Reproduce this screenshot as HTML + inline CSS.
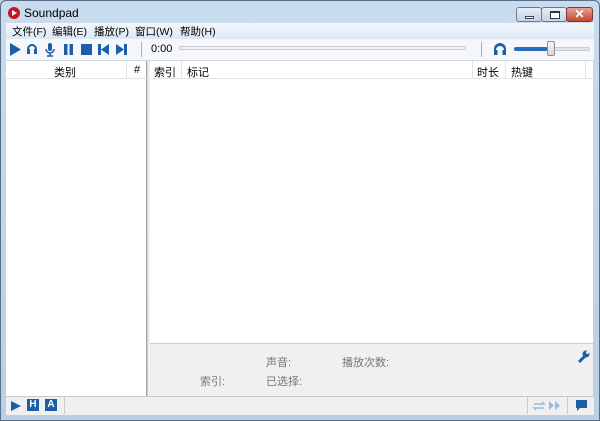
<!DOCTYPE html><html><head><meta charset="utf-8"><style>
*{margin:0;padding:0;box-sizing:border-box}
body{width:600px;height:421px;overflow:hidden;font-family:"Liberation Sans","Noto Sans CJK SC",sans-serif;font-size:11px;color:#000;background:#bcd3ea;position:relative}
.a{position:absolute}
.frame{left:0;top:0;width:600px;height:421px;background:linear-gradient(#c9dcef,#b7cfe8);border:1px solid #5a6e84;border-radius:6px 6px 0 0}
.m{top:24px;font-size:10.5px}
</style></head><body>
<div class="a frame"></div>
<svg class="a" style="left:7px;top:6px" width="14" height="14"><circle cx="7" cy="7" r="6" fill="#c8141e"/><path d="M5 4l5 3-5 3z" fill="#fff"/></svg>
<div class="a" style="left:24px;top:6px;font-size:12px">Soundpad</div>
<div class="a" style="left:516px;top:7px;width:26px;height:15px;border:1px solid #6b7c90;border-radius:3px;background:linear-gradient(#e6eef8,#c3d3e6)"><div class="a" style="left:8px;top:8px;width:9px;height:3px;background:#fff;border:1px solid #444"></div></div>
<div class="a" style="left:541px;top:7px;width:26px;height:15px;border:1px solid #6b7c90;border-radius:3px;background:linear-gradient(#e6eef8,#c3d3e6)"><div class="a" style="left:8px;top:3px;width:10px;height:8px;border:1px solid #333;border-top-width:2px;background:#fff"></div></div>
<div class="a" style="left:566px;top:7px;width:27px;height:15px;border:1px solid #7a3a30;border-radius:3px;background:linear-gradient(#e8a095,#c8452f);color:#fff;font-weight:bold;text-align:center;line-height:13px;font-size:12px">✕</div>
<div class="a" style="left:6px;top:23px;width:588px;height:16px;background:linear-gradient(#f4f8fd,#dde8f5)"></div>
<div class="a m" style="left:12px">文件(F)</div>
<div class="a m" style="left:52px">编辑(E)</div>
<div class="a m" style="left:94px">播放(P)</div>
<div class="a m" style="left:135px">窗口(W)</div>
<div class="a m" style="left:180px">帮助(H)</div>
<div class="a" style="left:6px;top:39px;width:588px;height:22px;background:#f5f7fa;border-bottom:1px solid #cfd6df"></div>
<svg class="a" style="left:8px;top:42px" width="125" height="15" fill="#1c5fa6">
<path d="M2 1l11 6.5-11 6.5z"/>
<path d="M19 12v-5a5 5 0 0 1 10 0v5h-3v-5h1a3 3 0 0 0-6 0h1v5z"/>
<rect x="40" y="1" width="4" height="8" rx="2"/><path d="M38 7a4 4 0 0 0 8 0M42 11v3M39 14h6" stroke="#1c5fa6" stroke-width="1.5" fill="none"/>
<rect x="56" y="2" width="3.5" height="11"/><rect x="61.5" y="2" width="3.5" height="11"/>
<rect x="73" y="2" width="11" height="11"/>
<rect x="90" y="2" width="3" height="11"/><path d="M101 2v11l-8-5.5z"/>
<path d="M108 2v11l8-5.5z"/><rect x="116" y="2" width="3" height="11"/>
</svg>
<div class="a" style="left:141px;top:42px;width:1px;height:15px;background:#a8b0ba"></div>
<div class="a" style="left:151px;top:43px">0:00</div>
<div class="a" style="left:179px;top:46px;width:287px;height:4px;border:1px solid #c8ccd2;border-radius:2px;background:#f0f0f0"></div>
<div class="a" style="left:481px;top:42px;width:1px;height:15px;background:#a8b0ba"></div>
<svg class="a" style="left:493px;top:42px" width="14" height="14" fill="#1c5fa6"><path d="M1 13v-6a6 6 0 0 1 12 0v6h-3.5v-5h1.5a4 4 0 0 0-8 0h1.5v5z"/></svg>
<div class="a" style="left:514px;top:47px;width:34px;height:4px;background:#2a6cb5;border-radius:2px"></div>
<div class="a" style="left:548px;top:47px;width:42px;height:4px;background:#e2e4e8;border:1px solid #c8ccd2;border-radius:2px"></div>
<div class="a" style="left:547px;top:41px;width:8px;height:15px;background:linear-gradient(#f4f4f4,#d8d8d8);border:1px solid #8a8f96;border-radius:2px"></div>
<div class="a" style="left:6px;top:61px;width:141px;height:335px;background:#fff;border-right:1px solid #a0a8b2"></div>
<div class="a" style="left:150px;top:61px;width:443px;height:282px;background:#fff"></div>
<div class="a" style="left:6px;top:61px;width:141px;height:18px;border-bottom:1px solid #e0e3e8"></div>
<div class="a" style="left:54px;top:64px">类别</div>
<div class="a" style="left:126px;top:61px;width:1px;height:18px;background:#e0e3e8"></div>
<div class="a" style="left:134px;top:64px">#</div>
<div class="a" style="left:150px;top:61px;width:443px;height:18px;border-bottom:1px solid #e0e3e8"></div>
<div class="a" style="left:154px;top:64px">索引</div>
<div class="a" style="left:181px;top:61px;width:1px;height:18px;background:#e0e3e8"></div>
<div class="a" style="left:187px;top:64px">标记</div>
<div class="a" style="left:472px;top:61px;width:1px;height:18px;background:#e0e3e8"></div>
<div class="a" style="left:477px;top:64px">时长</div>
<div class="a" style="left:505px;top:61px;width:1px;height:18px;background:#e0e3e8"></div>
<div class="a" style="left:511px;top:64px">热键</div>
<div class="a" style="left:585px;top:61px;width:1px;height:18px;background:#e0e3e8"></div>
<div class="a" style="left:148px;top:61px;width:2px;height:335px;background:#f0f0f0"></div>
<div class="a" style="left:150px;top:343px;width:443px;height:53px;background:#f0f0f0;border-top:1px solid #c8ccd2"></div>
<div class="a" style="left:266px;top:354px;color:#777">声音:</div>
<div class="a" style="left:342px;top:354px;color:#777">播放次数:</div>
<div class="a" style="left:200px;top:373px;color:#777">索引:</div>
<div class="a" style="left:266px;top:373px;color:#777">已选择:</div>
<svg class="a" style="left:576px;top:350px" width="14" height="14"><path d="M3 12l6-6" stroke="#1c5fa6" stroke-width="3"/><circle cx="10" cy="4" r="3.5" fill="#1c5fa6"/><circle cx="11.5" cy="2.5" r="1.5" fill="#f0f0f0"/></svg>
<div class="a" style="left:6px;top:396px;width:588px;height:19px;background:#f0f0f0;border-top:1px solid #c8ccd2"></div>
<svg class="a" style="left:10px;top:400px" width="12" height="12" fill="#1c5fa6"><path d="M1 1l10 5-10 5z"/></svg>
<div class="a" style="left:27px;top:399px;width:12px;height:12px;background:#1c5fa6;color:#fff;font-weight:bold;font-size:10px;text-align:center;line-height:12px">H</div>
<div class="a" style="left:45px;top:399px;width:12px;height:12px;background:#1c5fa6;color:#fff;font-weight:bold;font-size:10px;text-align:center;line-height:12px">A</div>
<div class="a" style="left:64px;top:397px;width:1px;height:17px;background:#c8ccd2"></div>
<div class="a" style="left:527px;top:397px;width:1px;height:17px;background:#c8ccd2"></div>
<div class="a" style="left:567px;top:397px;width:1px;height:17px;background:#c8ccd2"></div>
<svg class="a" style="left:532px;top:399px" width="32" height="13" fill="none" stroke="#9cbde0" stroke-width="1.5"><path d="M2 5h10l-2-2M12 9H2l2 2"/><path d="M17 2l5 4.5-5 4.5zM23 2l5 4.5-5 4.5z" fill="#9cbde0" stroke="none"/></svg>
<svg class="a" style="left:575px;top:399px" width="13" height="13" fill="#1c5fa6"><path d="M1 1h11v8h-7l-3 3v-3h-1z"/></svg>
</body></html>
